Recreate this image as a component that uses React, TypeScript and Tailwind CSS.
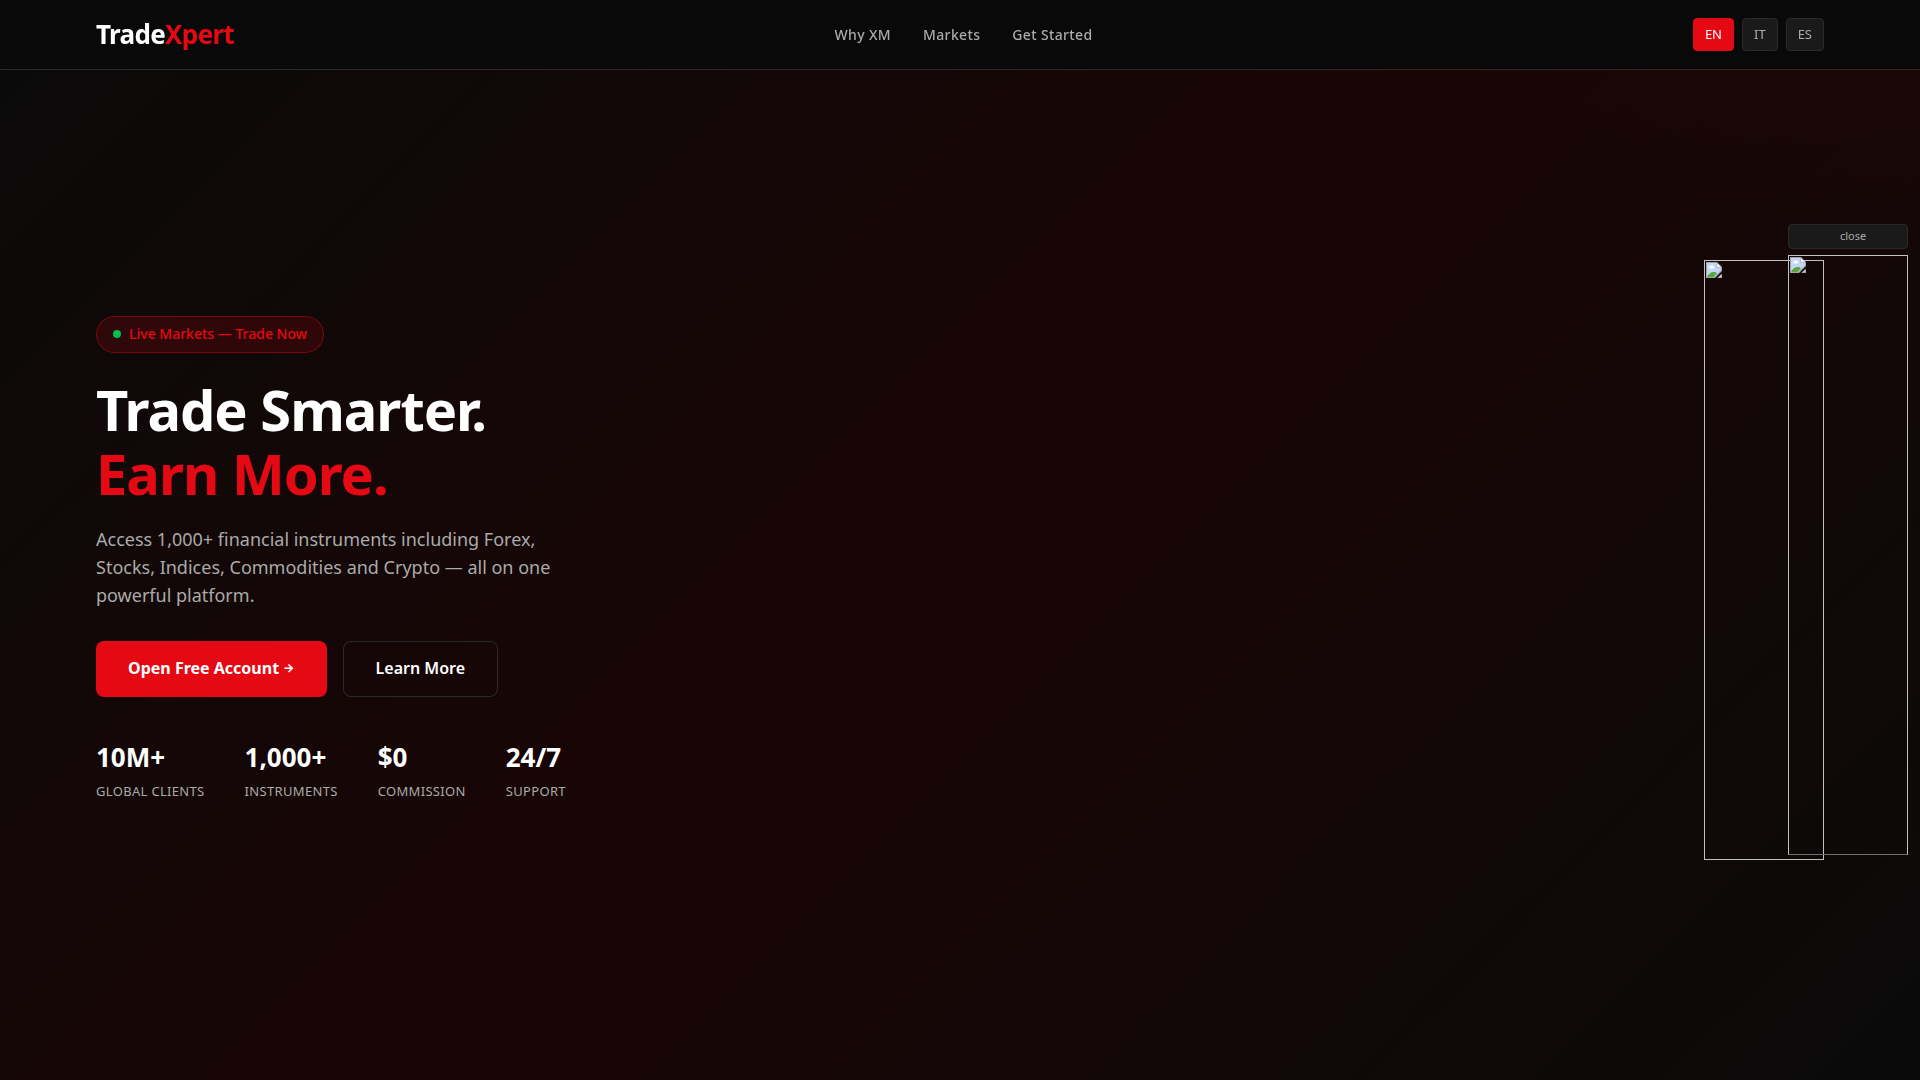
const navLinks = [
  { label: "Why XM", href: "#why" },
  { label: "Markets", href: "#markets" },
  { label: "Get Started", href: "#start" },
];

const stats = [
  { value: "10M+", label: "Global Clients" },
  { value: "1,000+", label: "Instruments" },
  { value: "$0", label: "Commission" },
  { value: "24/7", label: "Support" },
];

const langBase = "h-[33px] px-[11px] rounded border text-[13px] cursor-pointer";

function BrokenImage() {
  return (
    <svg width="16" height="16" viewBox="0 0 16 16" aria-hidden="true">
      <path d="M0 0h11l5 5v4L9 16H0z" fill="#a3a3a3" />
      <path d="M1 1h9.500v4.500H15v3L8 15H1z" fill="#c3d6f7" />
      <path d="M11 1l4 4h-4z" fill="#f4f4f4" />
      <path d="M3 5.500a1.200 1.200 0 0 1 1.200-1.200a1.700 1.700 0 0 1 3.200 0a1.200 1.200 0 0 1 .4 2.200H4A1 1 0 0 1 3 5.500z" fill="#fff" />
      <path d="M1 15c1-3 4-5 6.500-5c1.500 0 2.500.5 3.500 1.200L7.500 15z" fill="#55a83a" />
      <path d="M16 11.500V16h-5z" fill="#a3a3a3" />
      <path d="M15 13v2h-2z" fill="#c3d6f7" />
    </svg>
  );
}

export default function App() {
  return (
    <div className="min-h-screen bg-[#0a0a0a] text-white font-['Noto_Sans',sans-serif]">
      {/* Header */}
      <header className="fixed top-0 inset-x-0 z-10 flex items-center justify-between px-[5%] h-[70px] bg-[#0a0a0a]/95 border-b border-[#2a2a2a]">
        <a href="#" className="pb-0.5 text-[26px] leading-9 font-bold tracking-tight">
          Trade<span className="text-[#e50914]">Xpert</span>
        </a>
        <nav className="flex gap-8">
          {navLinks.map((l) => (
            <a key={l.href} href={l.href} className="text-sm font-medium tracking-wide text-[#aaaaaa]">
              {l.label}
            </a>
          ))}
        </nav>
        <div className="flex gap-2">
          <button className={`${langBase} bg-[#e50914] border-[#e50914] text-white`}>EN</button>
          <button className={`${langBase} bg-[#1a1a1a] border-[#2a2a2a] text-[#aaaaaa]`}>IT</button>
          <button className={`${langBase} bg-[#1a1a1a] border-[#2a2a2a] text-[#aaaaaa]`}>ES</button>
        </div>
      </header>

      {/* Hero */}
      <section className="min-h-screen flex items-center justify-between px-[5%] pt-[100px] pb-[60px] bg-[radial-gradient(500px_250px_at_104%_0%,rgba(229,9,20,0.05),transparent),linear-gradient(135deg,#0a0a0a_0%,#1a0505_50%,#0a0a0a_100%)]">
        <div className="w-full max-w-[560px] pb-0.5">
          <div className="inline-flex items-center gap-2 h-[37px] px-4 rounded-full border border-[#e50914]/40 bg-[#e50914]/15 text-sm font-medium text-[#e50914]">
            <span className="size-2 rounded-full bg-[#00c04b]" />
            Live Markets — Trade Now
          </div>
          <h1 className="mt-6 text-[56px] leading-16 font-bold tracking-[-1px]">
            Trade Smarter.
            <br />
            <span className="text-[#e50914]">Earn More.</span>
          </h1>
          <p className="mt-5 max-w-[480px] text-lg leading-7 text-[#aaaaaa]">
            Access 1,000+ financial instruments including Forex, Stocks, Indices, Commodities and Crypto — all on one
            powerful platform.
          </p>
          <div className="mt-8 flex gap-4">
            <a href="#start" className="flex items-center gap-1 h-14 px-8 pb-0.5 rounded-lg bg-[#e50914] text-base font-bold">
              Open Free Account
              <span className="font-['Inter',sans-serif] text-xs">→</span>
            </a>
            <a href="#why" className="flex items-center h-14 px-8 pb-0.5 rounded-lg border border-[#2a2a2a] text-base font-semibold">
              Learn More
            </a>
          </div>
          <div className="mt-10 flex gap-10">
            {stats.map((s) => (
              <div key={s.label}>
                <div className="text-[26px] leading-10 font-bold">{s.value}</div>
                <div className="mt-0.5 text-[13px] leading-6 uppercase tracking-wide text-[#aaaaaa]">{s.label}</div>
              </div>
            ))}
          </div>
        </div>

        <a href="#promo" aria-label="Promotion" className="w-[120px] h-[600px] border border-[#c0c0c0] p-px">
          <BrokenImage />
        </a>
      </section>

      {/* Floating banner */}
      <aside className="fixed right-3 top-56 z-20 w-[120px]">
        <button className="block w-full h-[25px] pl-[10px] rounded border border-[#2a2a2a] bg-[#1a1a1a] text-[11px] text-[#aaaaaa] cursor-pointer">
          close
        </button>
        <a href="#banner" aria-label="Banner" className="mt-[6px] block h-[600px] border border-[#c0c0c0] border-b-[#707070] p-px">
          <BrokenImage />
        </a>
      </aside>
    </div>
  );
}
